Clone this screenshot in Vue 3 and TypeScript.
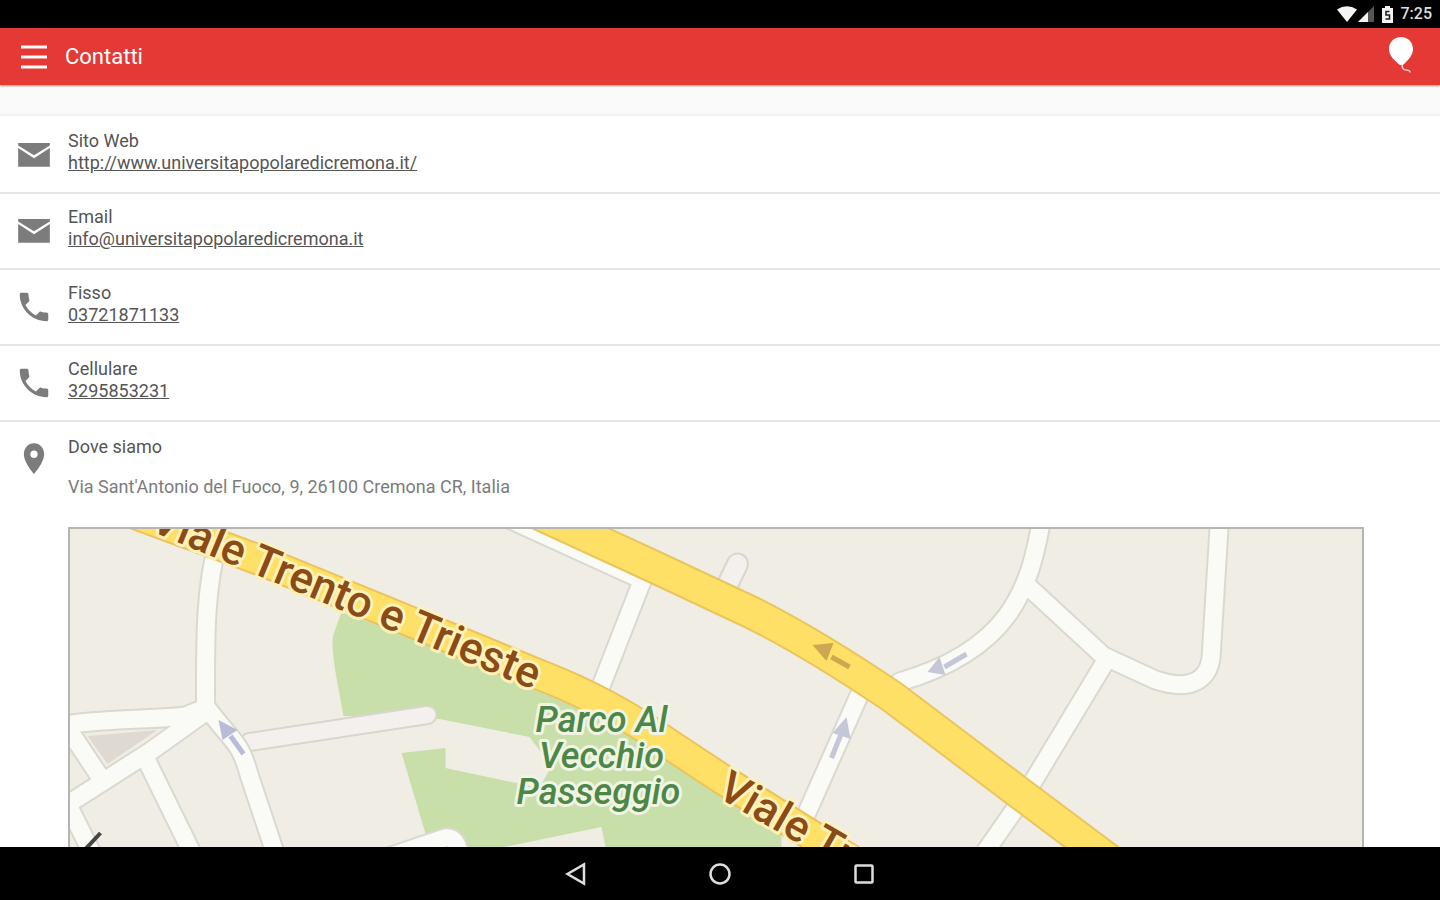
<script setup lang="ts">
interface Contact {
  label: string
  value: string
  href: string
  icon: 'mail' | 'phone'
}

const contacts: Contact[] = [
  { label: 'Sito Web', value: 'http://www.universitapopolaredicremona.it/', href: 'http://www.universitapopolaredicremona.it/', icon: 'mail' },
  { label: 'Email', value: 'info@universitapopolaredicremona.it', href: 'mailto:info@universitapopolaredicremona.it', icon: 'mail' },
  { label: 'Fisso', value: '03721871133', href: 'tel:03721871133', icon: 'phone' },
  { label: 'Cellulare', value: '3295853231', href: 'tel:3295853231', icon: 'phone' },
]

const icons = {
  mail: 'M2 4.4H22V6L12 12.2L2 6ZM2 7.6L12 14L22 7.6V19.4H2Z',
  phone: 'M6.62 10.79c1.44 2.83 3.76 5.14 6.59 6.59l2.2-2.2c.27-.27.67-.36 1.02-.24 1.12.37 2.33.57 3.57.57.55 0 1 .45 1 1V20c0 .55-.45 1-1 1-9.39 0-17-7.61-17-17 0-.55.45-1 1-1h3.5c.55 0 1 .45 1 1 0 1.25.2 2.45.57 3.57.11.35.03.74-.25 1.02l-2.2 2.2z',
}

// Local streets, drawn twice: casing first, then surface
const streets = [
  'M219 540C205 590 206 640 206 706',
  'M60 726C100 718 160 720 186 716L206 708',
  'M206 712L150 752L56 812',
  'M206 706C235 745 240 740 250 776L278 860',
  'M146 758L196 860',
  'M60 716L100 776',
  'M66 800L96 860',
  'M380 860L445 838Q458 836 460 856',
  'M505 517L643 580L600 690',
  'M1042 520C1030 590 1010 650 900 682',
  'M1026 584L1104 656L1156 680C1192 692 1212 680 1212 650L1220 520',
  'M1108 658L1026 794L980 860',
  'M862 690L806 816',
]

const westAvenue = 'M130 512L260 560L373 606L543 676Q610 702 671 745L724 780L880 878'
const eastAvenue = 'M540 514L655 567L753 613Q813 643 893 697L1020 793L1120 868'
</script>

<template>
  <div class="screen">
    <div class="status">
      <svg class="wifi" width="20" height="16" viewBox="0 0 20 16" aria-hidden="true"><path d="M0 3.5Q10-3 20 3.5L10 16Z" fill="#f4f4f4" /></svg>
      <svg width="16" height="16" viewBox="0 0 16 16" aria-hidden="true">
        <path d="M0 16L16 0V16Z" fill="#555" /><path d="M0 16L10 6V16Z" fill="#f4f4f4" />
      </svg>
      <svg class="battery" width="11" height="17" viewBox="0 0 11 17" aria-hidden="true">
        <path d="M3 0H8V2H11V17H0V2H3Z" fill="#f4f4f4" /><path d="M7.5 5.5H4V9H7.5V13H3.5" fill="none" stroke="#222" stroke-width="1.6" />
      </svg>
      <time>7:25</time>
    </div>

    <header class="bar">
      <button class="plain" aria-label="Menu">
        <svg width="28" height="26" viewBox="0 0 28 26" aria-hidden="true">
          <path d="M1 3H27M1 13H27M1 23H27" stroke="#fff" stroke-width="3" />
        </svg>
      </button>
      <h1>Contatti</h1>
      <button class="plain balloon" aria-label="Palloncino">
        <svg width="26" height="38" viewBox="0 0 26 38" aria-hidden="true">
          <path d="M13 1C20 1 25 6 25 13C25 20 19 25 15 29H12C7 25 1 20 1 13C1 6 6 1 13 1Z" fill="#fff" />
          <path d="M14 28Q14 34 18 34T22 36.5" fill="none" stroke="#fff" stroke-opacity=".75" stroke-width="1.5" />
        </svg>
      </button>
    </header>

    <main>
      <div class="band"></div>
      <ul class="list">
        <li v-for="c in contacts" :key="c.label" class="row">
          <svg class="icon" viewBox="0 0 24 24" aria-hidden="true"><path :d="icons[c.icon]" /></svg>
          <div class="text">
            <span>{{ c.label }}</span>
            <a :href="c.href">{{ c.value }}</a>
          </div>
        </li>
      </ul>
      <section class="place">
        <svg class="icon" viewBox="0 0 24 24" aria-hidden="true">
          <path d="M12 2C8.13 2 5.6 5.13 5.6 9c0 5.25 6.4 12.5 6.4 12.5S18.4 14.25 18.4 9C18.4 5.13 15.87 2 12 2zm0 9.3a2.3 2.3 0 1 1 0-4.6 2.3 2.3 0 0 1 0 4.6z" />
        </svg>
        <div class="details">
          <h2>Dove siamo</h2>
          <address>Via Sant'Antonio del Fuoco, 9, 26100 Cremona CR, Italia</address>
          <div class="map">
            <svg viewBox="70 529 1293 318" preserveAspectRatio="xMidYMin slice" role="img" aria-label="Mappa">
              <defs>
                <path id="viale-west" d="M149 530L580 709" />
                <path id="viale-east" d="M716 796L960 936" />
              </defs>
              <rect x="0" y="500" width="1440" height="400" fill="#f0ede5" />
              <path d="M342 612L560 690L700 760L782 820V847H606L602 827L505 847H430L402 753L446 748V768L540 788L552 766L530 737L440 719L344 716C340 690 330 650 334 634Z" fill="#c8dfaa" />
              <g fill="none" stroke-linecap="round" stroke-linejoin="round">
                <path d="M728 585L738 564" stroke="#d9d6d0" stroke-width="23" />
                <path d="M728 585L738 564" stroke="#f3f0ed" stroke-width="19" />
                <path d="M250 742L428 715" stroke="#d9d6d0" stroke-width="20" />
                <path d="M250 742L428 715" stroke="#f3f0ed" stroke-width="16" />
                <path v-for="s in streets" :key="s" :d="s" stroke="#dad9d0" stroke-width="21" />
                <path v-for="s in streets" :key="s" :d="s" stroke="#fafaf7" stroke-width="17" />
              </g>
              <path d="M88 736L158 730L108 764Z" fill="#dedad1" />
              <g fill="none" stroke-linejoin="round">
                <path :d="westAvenue" stroke="#ecc35a" stroke-width="32" />
                <path :d="westAvenue" stroke="#ffe066" stroke-width="28" />
                <path :d="eastAvenue" stroke="#e9c65c" stroke-width="34" />
                <path :d="eastAvenue" stroke="#ffe066" stroke-width="30" />
              </g>
              <g stroke-width="5">
                <path d="M850 667L832 657" stroke="#cfa651" /><path d="M813 645L834 643L827 661Z" fill="#cfa651" />
                <path d="M967 654L945 667" stroke="#c5c6d8" /><path d="M928 672L940 657L946 675Z" fill="#c5c6d8" />
                <path d="M832 758L842 733" stroke="#c5c6d8" /><path d="M847 717L833 733L851 739Z" fill="#c5c6d8" />
                <path d="M244 754L231 736" stroke="#b9bcd6" /><path d="M219 720L238 730L223 740Z" fill="#b9bcd6" />
              </g>
              <path d="M86 849L101 833" stroke="#444" stroke-width="4" />
              <g class="street-name">
                <text><textPath href="#viale-west">Viale Trento e Trieste</textPath></text>
                <text><textPath href="#viale-east">Viale Tr</textPath></text>
              </g>
              <g class="park-name">
                <text x="602" y="732">Parco Al</text>
                <text x="602" y="768">Vecchio</text>
                <text x="599" y="804">Passeggio</text>
              </g>
            </svg>
          </div>
        </div>
      </section>
    </main>

    <nav class="system">
      <button class="plain" aria-label="Indietro"><svg width="24" height="24" viewBox="0 0 24 24"><path d="M20 2.500V21.500L3.500 12Z" /></svg></button>
      <button class="plain" aria-label="Home"><svg width="24" height="24" viewBox="0 0 24 24"><circle cx="12" cy="12" r="9.500" /></svg></button>
      <button class="plain" aria-label="Recenti"><svg width="24" height="24" viewBox="0 0 24 24"><rect x="3.500" y="3.500" width="17" height="17" rx="1" /></svg></button>
    </nav>
  </div>
</template>

<style>
body { margin: 0; }
</style>

<style scoped>
.screen {
  height: 100vh;
  display: flex;
  flex-direction: column;
  overflow: hidden;
  background: #fff;
  color: #555;
  font-family: Roboto, "Liberation Sans", sans-serif;
  font-size: 18px;
  line-height: 22px;
}
.plain { display: flex; padding: 0; border: 0; background: none; }
.status {
  flex: none;
  display: flex;
  align-items: center;
  justify-content: flex-end;
  height: 28px;
  padding-right: 8px;
  background: #000;
  color: #ddd;
  font-size: 16px;
  font-weight: 500;
}
.wifi { margin-right: 1px; }
.battery { margin: 0 8px; }
.bar {
  flex: none;
  z-index: 1;
  display: flex;
  align-items: center;
  height: 57px;
  padding: 0 26px 0 20px;
  background: #e53935;
  box-shadow: 0 1px 2px rgba(0, 0, 0, .4);
}
.balloon { padding-bottom: 3px; }
h1 {
  flex: 1;
  margin: 0 0 0 17px;
  color: #fff;
  font-size: 22px;
  font-weight: 400;
  line-height: 28px;
}
main {
  flex: 1;
  min-height: 0;
  display: flex;
  flex-direction: column;
}
.band { flex: none; height: 29px; border-bottom: 2px solid #f1f1f1; background: #fafafa; }
.list { flex: none; margin: 0; padding: 2px 0 0; list-style: none; }
.row {
  display: flex;
  align-items: center;
  gap: 15px;
  height: 74px;
  padding-left: 15px;
  border-bottom: 2px solid #e6e6e6;
}
.icon { flex: none; width: 38px; height: 38px; fill: #7c7c7c; }
.text { display: flex; flex-direction: column; align-items: flex-start; padding-bottom: 6px; }
a { color: #555; text-decoration: underline; }
.place {
  flex: 1;
  min-height: 0;
  display: flex;
  gap: 15px;
  padding: 14px 76px 0 15px;
}
.place > .icon { margin-top: 4px; }
.details { flex: 1; min-width: 0; display: flex; flex-direction: column; }
h2 { margin: 0 0 18px; font-size: 18px; font-weight: 400; line-height: 22px; }
address { margin-bottom: 29px; color: #7c7c7c; font-style: normal; }
.map { flex: 1; min-height: 0; border: 2px solid #b5b5b3; border-bottom: 0; }
.map svg { display: block; width: 100%; height: 100%; }
.street-name { fill: #8b4b16; stroke: #fff1b8; stroke-width: 6px; paint-order: stroke; stroke-linejoin: round; font-size: 44px; font-weight: 500; }
.park-name { fill: #4c8748; stroke: #f0f4e2; stroke-width: 6px; paint-order: stroke; stroke-linejoin: round; font-size: 36px; font-style: italic; font-weight: 500; text-anchor: middle; }
.system {
  flex: none;
  display: flex;
  align-items: center;
  justify-content: center;
  gap: 120px;
  height: 53px;
  background: #000;
}
.system svg { fill: none; stroke: #ddd; stroke-width: 2.5px; }
</style>
